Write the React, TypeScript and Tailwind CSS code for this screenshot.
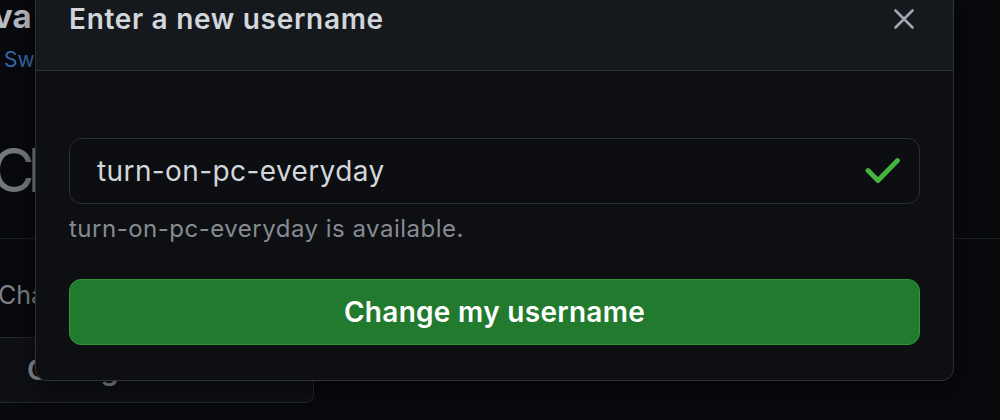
import React from 'react';

const CloseIcon: React.FC = () => (
  <svg width="20" height="20" viewBox="0 0 20 20" fill="none" className="shrink-0">
    <path d="M1.5 1.5L18.5 18.5M18.5 1.5L1.5 18.5" stroke="#a2a6ad" strokeWidth="2.6" strokeLinecap="round" />
  </svg>
);

const CheckIcon: React.FC = () => (
  <svg width="36" height="30" viewBox="0 0 36 30" fill="none" className="shrink-0">
    <path d="M3 14.5L13 24.5L32.5 4.5" stroke="#45b340" strokeWidth="4.8" strokeLinecap="round" strokeLinejoin="round" />
  </svg>
);

// the settings page sitting behind the dialog
const BackgroundPage: React.FC = () => (
  <div className="flex flex-col">
    <div className="-ml-[7px] text-[33px] font-bold leading-none text-[#b8bbc1]">va</div>
    <div className="mt-[16px] ml-[4px] text-[21px] leading-none text-[#3568ad]">Sw</div>
    <div className="mt-[70px] -ml-[9px] text-[60px] leading-none tracking-[-7px] text-[#74777d]">Ch</div>
    <div className="mt-[38px] border-t border-[#1c1f24]" />
    <div className="mt-[44px] -ml-[2px] text-[25px] leading-none text-[#7f8288]">Cha</div>
    <div className="mt-[29px] -ml-[10px] flex h-[66px] w-[324px] items-center rounded-[8px] border border-[#25282e] bg-[#0e1015] pl-[36px] text-[29px] font-semibold text-[#8a8d93]">
      Change username
    </div>
  </div>
);

export default function App() {
  return (
    <div className="relative h-[420px] w-[1000px] overflow-hidden bg-[#08090d]" style={{ fontFamily: 'Inter, "Noto Sans", sans-serif' }}>
      <BackgroundPage />

      <div className="absolute left-[35px] top-[-12px] w-[919px] overflow-hidden rounded-[12px] border border-[#2e3137] bg-[#0d0f13] shadow-[0_8px_24px_rgba(0,0,0,0.5)]">
        <div className="flex h-[82px] items-start justify-between border-b border-[#2b2e34] bg-[#15181d] pl-[33px] pr-[39px] pt-[16px]">
          <h2 className="text-[28px] font-semibold leading-none tracking-[0.7px] text-[#d3d6db]">Enter a new username</h2>
          <div className="mt-[4px]">
            <CloseIcon />
          </div>
        </div>

        <div className="flex flex-col px-[33px] pb-[35px] pt-[67px]">
          <div className="flex h-[66px] items-center justify-between rounded-[12px] border border-[#2b2e34] bg-[#0c0e12] pl-[27px] pr-[18px]">
            <span className="text-[28px] leading-none tracking-[0.4px] text-[#d3d6da]">turn-on-pc-everyday</span>
            <CheckIcon />
          </div>
          <p className="mt-[10px] text-[24px] leading-[30px] tracking-[0.5px] text-[#868a91]">turn-on-pc-everyday is available.</p>
          <button className="mt-[35px] flex h-[66px] items-center justify-center rounded-[12px] border border-[#2c9a3b] bg-[#217a2d] text-[28px] font-semibold tracking-[0.3px] text-white">
            Change my username
          </button>
        </div>
      </div>
    </div>
  );
}
